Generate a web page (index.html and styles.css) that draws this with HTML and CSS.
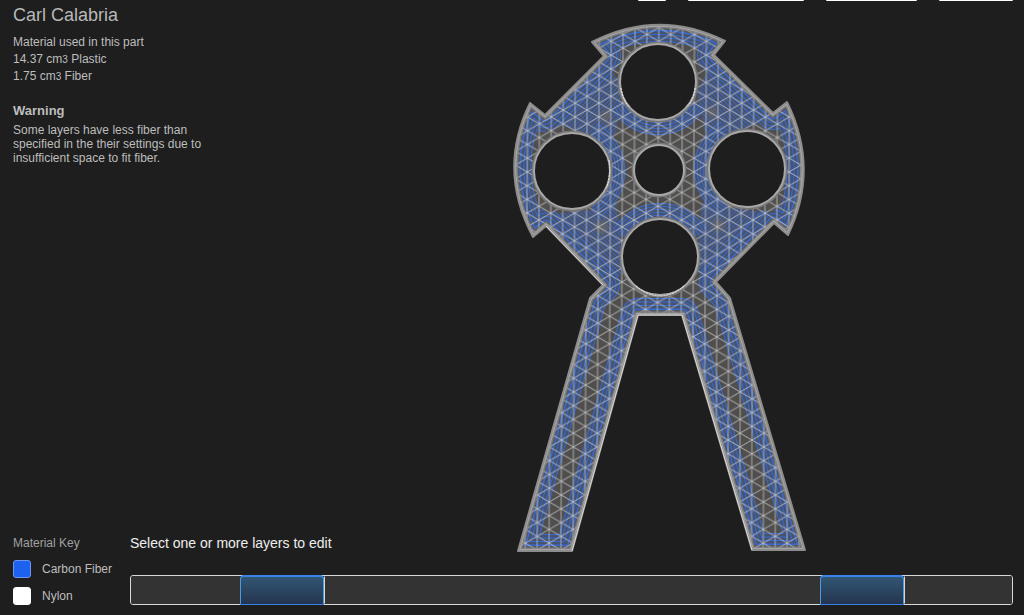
FILE: index.html
```html
<!DOCTYPE html>
<html lang="en">
<head>
<meta charset="utf-8">
<title>Carl Calabria</title>
<link rel="stylesheet" href="styles.css">
</head>
<body>
<main class="viewer">
  <section class="info">
    <h1 class="title">Carl Calabria</h1>
    <div class="usage">
      <p>Material used in this part</p>
      <p>14.37 cm<span class="cube">3</span> Plastic</p>
      <p>1.75 cm<span class="cube">3</span> Fiber</p>
    </div>
    <h2 class="warning-title">Warning</h2>
    <p class="warning">Some layers have less fiber than specified in the their settings due to insufficient space to fit fiber.</p>
  </section>

  <section class="stage">
    <div class="tools" aria-hidden="true">
      <span class="tool tool-icon"></span>
      <span class="tool tool-wide"></span>
      <span class="tool tool-mid"></span>
      <span class="tool tool-small"></span>
    </div>
    <svg class="part" width="308" height="538" viewBox="506 20 308 538" role="img" aria-label="Part layer">
      <defs>
        <path id="outline" d="M592 42 Q659 8 725 41 L714 55 L773 113 L787 102 Q820 169 788 235 L774 223 L716 282 L730 298 L805 550 H752 L682 315 H638 L572 551 H518 L590 298 L603 285 L546 226 L533 237 Q497 170 530 103 L545 115 L604 56 Z"/>
        <g id="holes">
          <circle cx="658" cy="82" r="38"/>
          <circle cx="572" cy="171" r="38"/>
          <circle cx="747" cy="169" r="38"/>
          <circle cx="660" cy="257" r="38"/>
          <circle cx="659" cy="170" r="25"/>
        </g>
        <path id="inner" d="M618 104 A46 46 0 0 0 698 104 M594 131 A46 46 0 0 1 594 211 M725 129 A46 46 0 0 0 725 209 M620 234 A46 46 0 0 1 700 234"/>
        <clipPath id="body"><use href="#outline"/></clipPath>
        <pattern id="mesh" width="23.8" height="13.75" patternUnits="userSpaceOnUse" patternTransform="translate(658.8 41.3) skewX(-0.3)">
          <path d="M0 0 L23.8 13.75 M0 13.75 L23.8 0" stroke="#d0d1d2" stroke-opacity=".72" fill="none"/>
          <path d="M0 0 V13.75 M23.8 0 V13.75" stroke="#d6d7d9" stroke-opacity=".6" stroke-width="1.1" fill="none"/>
          <path d="M11.9 0 V13.75" stroke="#d6d7d9" stroke-opacity=".6" stroke-width="1.1" fill="none"/>
        </pattern>
        <pattern id="hatchR" width="3" height="3" patternUnits="userSpaceOnUse" patternTransform="rotate(45)">
          <rect width="3" height="3" fill="#47526a"/><rect width="3" height="1" fill="#4163af"/>
        </pattern>
        <pattern id="hatchL" width="3" height="3" patternUnits="userSpaceOnUse" patternTransform="rotate(-45)">
          <rect width="3" height="3" fill="#47526a"/><rect width="3" height="1" fill="#4163af"/>
        </pattern>
        <filter id="soft" x="-20%" y="-20%" width="140%" height="140%"><feGaussianBlur stdDeviation="2"/></filter>
      </defs>
      <g clip-path="url(#body)">
        <use href="#outline" fill="#4f4e4d"/>
        <path d="M600 54 L622 86 L616 134 L590 136 L536 116 Z" fill="url(#hatchL)"/>
        <path d="M717 54 L697 92 L705 132 L736 132 L783 114 Z" fill="url(#hatchR)"/>
        <path d="M543 215 L592 210 L616 202 L626 270 L604 288 Z" fill="url(#hatchR)"/>
        <path d="M776 214 L726 207 L702 202 L696 270 L714 286 Z" fill="url(#hatchL)"/>
        <g class="rings">
          <use href="#inner" stroke="#3c69cc" stroke-width="16"/>
          <use href="#inner" stroke="#46536e" stroke-width="14"/>
          <use href="#inner" stroke="#3c69cc" stroke-width="10"/>
          <use href="#inner" stroke="#46536e" stroke-width="8"/>
          <use href="#inner" stroke="#3c69cc" stroke-width="4"/>
          <use href="#inner" stroke="#46536e" stroke-width="2"/>
          <use href="#outline" stroke="#3868d2" stroke-width="34"/>
          <use href="#outline" stroke="#46536c" stroke-width="32"/>
          <use href="#outline" stroke="#3868d2" stroke-width="27"/>
          <use href="#outline" stroke="#46536c" stroke-width="25"/>
          <use href="#outline" stroke="#3868d2" stroke-width="20"/>
          <use href="#outline" stroke="#46536c" stroke-width="18"/>
          <use href="#outline" stroke="#3868d2" stroke-width="13"/>
          <use href="#outline" stroke="#55585f" stroke-width="10"/>
        </g>
        <g fill="#6b6860" fill-opacity=".65" filter="url(#soft)">
          <circle cx="606" cy="116" r="6"/><circle cx="712" cy="112" r="6"/>
          <circle cx="602" cy="227" r="7"/><circle cx="718" cy="225" r="7"/>
        </g>
        <g fill="#525150">
          <path d="M629 140 L642 144 L633 155 Z M688 140 L676 145 L686 156 Z M629 201 L635 187 L646 196 Z M690 201 L683 187 L673 196 Z"/>
          <path d="M619 78 L622 56 L638 43 L628 65 Z M698 78 L695 56 L679 43 L688 65 Z M534 140 L548 130 L562 132 L541 147 Z M784 140 L772 130 L757 132 L777 147 Z M535 199 L548 213 L562 208 L541 194 Z M784 199 L772 213 L757 208 L777 194 Z"/>
        </g>
        <use href="#outline" fill="url(#mesh)"/>
        <use href="#outline" fill="none" stroke="#8a8a8a" stroke-opacity=".7" stroke-width="7"/>
        <use href="#outline" fill="none" stroke="#a6a6a6" stroke-width="4"/>
      </g>
      <use href="#outline" fill="none" stroke="#8c8c8c" stroke-width="2" stroke-linejoin="round"/>
      <path d="M638 315 H682 L752 550 M638 315 L572 551 M546 226 L603 285" fill="none" stroke="#d8d8d8" stroke-width="1"/>
      <use href="#holes" fill="#1e1e1e" stroke="#777" stroke-width="5"/>
      <use href="#holes" fill="#1e1e1e" stroke="#a8a8a8" stroke-width="2"/>
      <g fill="none" stroke="#eee" stroke-width="1" stroke-dasharray="2 1">
        <path d="M636 286 Q660 306 684 286 M695 88 Q694 100 687 107 M621 88 Q623 100 629 107 M609 160 Q611 178 606 188"/>
      </g>
    </svg>
  </section>

  <section class="key">
    <h2 class="key-title">Material Key</h2>
    <ul class="key-list">
      <li><span class="swatch carbon"></span>Carbon Fiber</li>
      <li><span class="swatch nylon"></span>Nylon</li>
    </ul>
  </section>

  <h2 class="prompt" id="prompt">Select one or more layers to edit</h2>
  <div class="layers" role="group" aria-labelledby="prompt">
    <button class="layer" style="flex-grow:107" aria-label="Layer group 1"></button>
    <button class="layer fiber" style="flex-grow:82" aria-label="Layer group 2"></button>
    <button class="layer" style="flex-grow:494" aria-label="Layer group 3"></button>
    <button class="layer fiber" style="flex-grow:82" aria-label="Layer group 4"></button>
    <button class="layer" style="flex-grow:106" aria-label="Layer group 5"></button>
  </div>
</main>
</body>
</html>
```
FILE: styles.css
```css
* { box-sizing: border-box; }

body {
  margin: 0;
  background: #1e1e1e;
  color: #bdbdbd;
  font: 12px/14px "Liberation Sans", Arial, sans-serif;
}

h1, h2, p, ul { margin: 0; padding: 0; font-weight: normal; }

.viewer {
  display: grid;
  grid-template-columns: 117px 200px 1fr;
  grid-template-rows: 1fr auto auto;
  min-height: 100vh;
  padding: 0 11px 10px 13px;
}

.info { grid-area: 1 / 1 / 2 / 3; padding-top: 4px; }
.title { font-size: 18px; line-height: 22px; color: #b8b8b8; }
.usage { margin-top: 8px; line-height: 17px; }
.cube { font-size: 10px; }
.warning-title {
  margin-top: 17px;
  font-size: 13px;
  font-weight: bold;
  line-height: 18px;
}
.warning { max-width: 190px; margin-top: 3px; }

.stage {
  grid-area: 1 / 3 / 3 / 4;
  display: flex;
  flex-direction: column;
  align-items: center;
}
.tools {
  display: flex;
  align-self: flex-end;
  gap: 22px;
}
.tool {
  height: 1px;
  background: #fff;
  border-radius: 0 0 1px 1px;
}
.tool-icon { width: 28px; }
.tool-wide { width: 116px; }
.tool-mid { width: 91px; }
.tool-small { width: 74px; }
.part {
  display: block;
  margin: 19px 24px 0 0;
}

.rings { fill: none; stroke-linejoin: round; }

.key { grid-area: 2 / 1 / 4 / 2; }
.key-title { font-size: 12px; line-height: 16px; color: #a0a0a0; }
.key-list {
  display: grid;
  gap: 9px;
  margin-top: 9px;
  list-style: none;
}
.key-list li {
  display: flex;
  align-items: center;
  gap: 11px;
}
.swatch {
  width: 18px;
  height: 18px;
  border: 1px solid #fff;
  border-radius: 3px;
}
.carbon { background: #1c62ee; border-color: #6b97f0; }
.nylon { background: #fff; }

.prompt {
  grid-area: 2 / 2;
  font-size: 14px;
  line-height: 16px;
  color: #eee;
  white-space: nowrap;
}
.layers {
  grid-area: 3 / 2 / 4 / 4;
  align-self: end;
  display: flex;
  height: 30px;
  border: 1px solid #d8d8d8;
  border-radius: 3px;
}
.layer {
  flex: 1 1 0;
  padding: 0;
  border: 1px solid #333;
  background: #333;
}
.layer:first-child { border-radius: 2px 0 0 2px; }
.layer:last-child { border-radius: 0 2px 2px 0; }
.layer.fiber {
  margin: -1px 0;
  border: 1px solid #4b9ae0;
  border-top: 2px solid #3983e6;
  border-bottom-color: #3a80ea;
  border-radius: 4px 4px 0 0;
  background: linear-gradient(#315673, #25344f);
}
.fiber + .layer { border-left-color: #d8d8d8; }
```
